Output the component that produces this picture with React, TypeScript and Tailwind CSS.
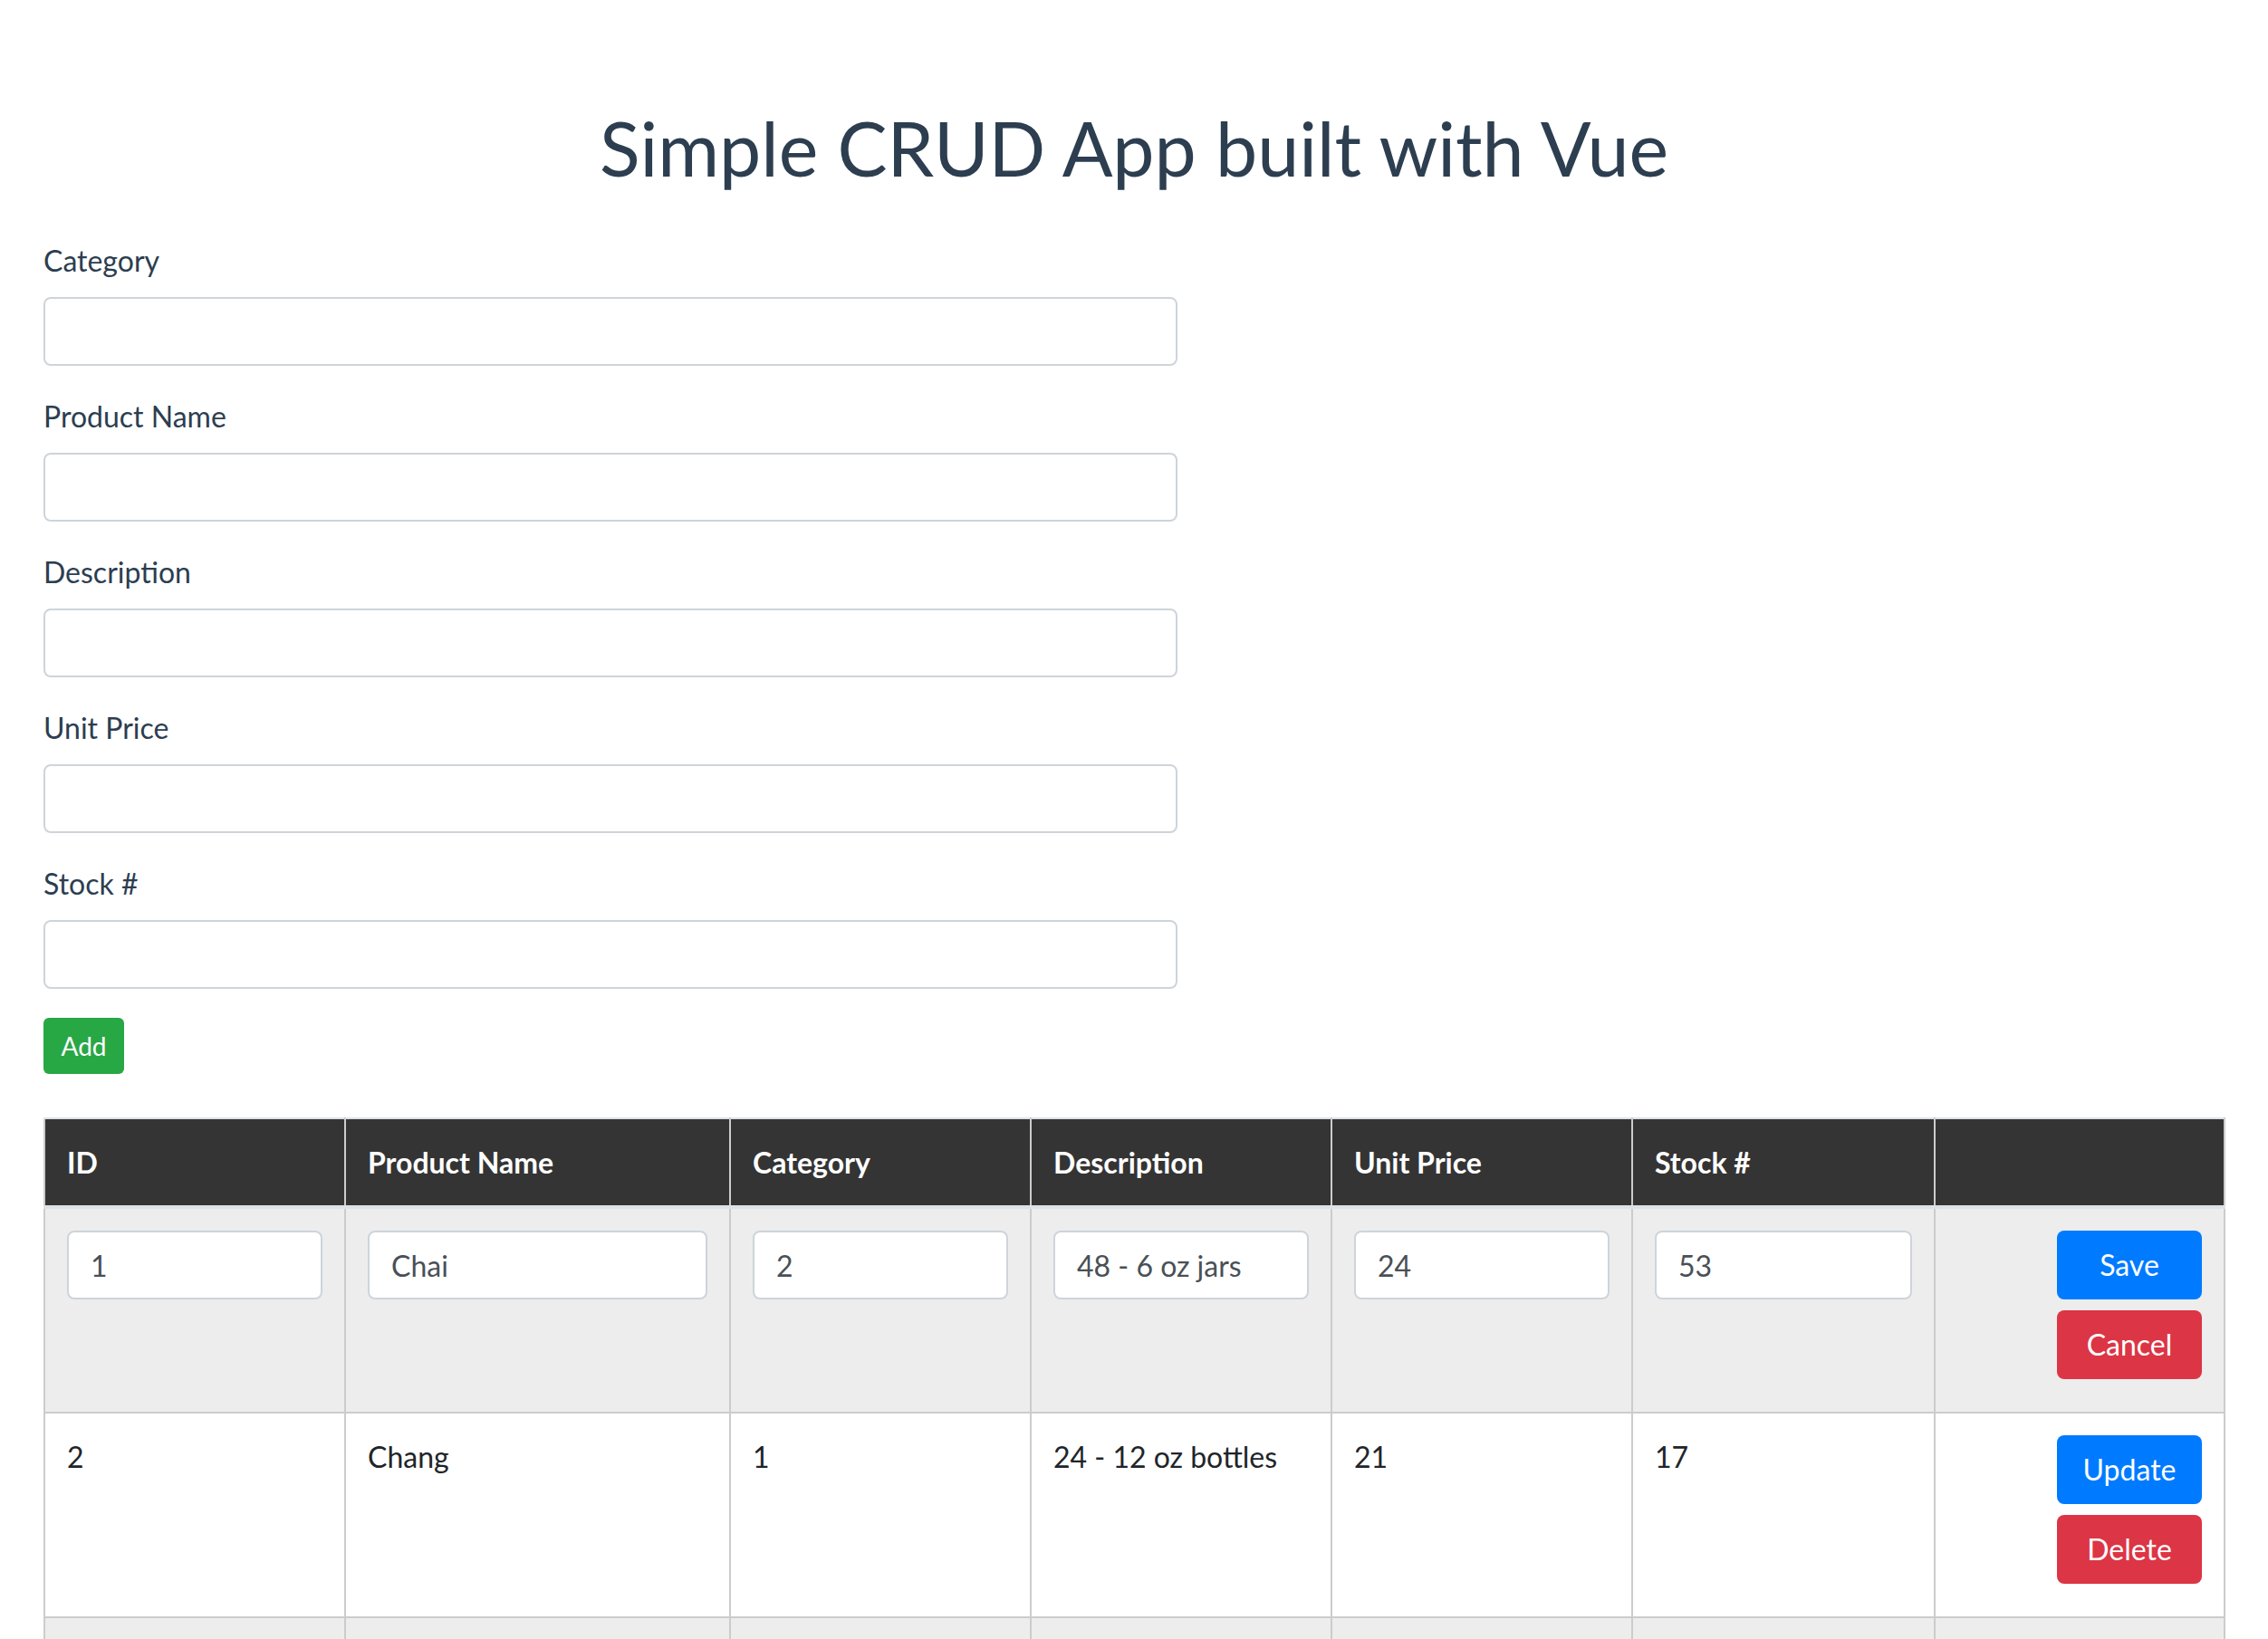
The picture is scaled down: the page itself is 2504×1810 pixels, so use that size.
import { useState } from "react";

type Product = {
  id: number;
  name: string;
  category: number;
  description: string;
  unitPrice: number;
  stock: number;
};

const fields = ["Category", "Product Name", "Description", "Unit Price", "Stock #"];

const initialProducts: Product[] = [
  { id: 1, name: "Chai", category: 2, description: "48 - 6 oz jars", unitPrice: 24, stock: 53 },
  { id: 2, name: "Chang", category: 1, description: "24 - 12 oz bottles", unitPrice: 21, stock: 17 },
];

const cellInput =
  "w-full h-[76px] px-6 bg-white border-2 border-[#ced4da] rounded-lg text-[32px] text-[#495057] outline-none";

const btn = "w-[160px] h-[76px] rounded-lg text-white text-[32px] leading-none";

const App = () => {
  const [products] = useState<Product[]>(initialProducts);
  const [editingId] = useState<number>(1);

  return (
    <div className="min-h-screen bg-white font-['Lato',sans-serif] text-[#2c3e50]">
      <h1 className="pt-[114px] mb-[51px] text-center text-[82.5px] leading-[1.2] font-normal">
        Simple CRUD App built with Vue
      </h1>

      <div className="px-12">
        <form className="w-[1252px]" onSubmit={(e) => e.preventDefault()}>
          {fields.map((f) => (
            <div key={f} className="mb-8">
              <label className="block mb-4 text-[32px] leading-[48px]">{f}</label>
              <input className="w-full h-[76px] px-6 border-2 border-[#ced4da] rounded-lg text-[32px] outline-none" />
            </div>
          ))}
          <button className="w-[89px] h-[62px] bg-[#28a745] text-white text-[28px] rounded-[6px]">Add</button>
        </form>

        <table className="mt-[48px] w-[2407px] table-fixed border-collapse text-[32px] leading-[48px] text-[#212529]">
          <colgroup>
            <col className="w-[332px]" />
            <col className="w-[425px]" />
            <col className="w-[332px]" />
            <col className="w-[332px]" />
            <col className="w-[332px]" />
            <col className="w-[334px]" />
            <col className="w-[320px]" />
          </colgroup>
          <thead>
            <tr className="bg-[#343434] text-white">
              {["ID", "Product Name", "Category", "Description", "Unit Price", "Stock #", ""].map((h, i) => (
                <th
                  key={i}
                  className="h-[98px] px-6 text-left font-bold border-2 border-[#cccccc] border-t-[#dee2e6] border-b-4 border-b-[#dee2e6]"
                >
                  {h}
                </th>
              ))}
            </tr>
          </thead>
          <tbody>
            {products.map((p, idx) => {
              const editing = p.id === editingId;
              const values = [p.id, p.name, p.category, p.description, p.unitPrice, p.stock];
              return (
                <tr key={p.id} className={idx % 2 === 0 ? "bg-[#ededed]" : "bg-white"}>
                  {values.map((v, i) => (
                    <td key={i} className="align-top px-6 pt-6 pb-9 border-2 border-[#cccccc]">
                      {editing ? <input className={cellInput} defaultValue={v} /> : v}
                    </td>
                  ))}
                  <td className="align-top px-6 pt-6 pb-9 border-2 border-[#cccccc]">
                    <div className="flex flex-col items-end gap-3">
                      <button className={`${btn} bg-[#007bff]`}>{editing ? "Save" : "Update"}</button>
                      <button className={`${btn} bg-[#dc3545]`}>{editing ? "Cancel" : "Delete"}</button>
                    </div>
                  </td>
                </tr>
              );
            })}
            <tr className="bg-[#ededed]">
              {[0, 1, 2, 3, 4, 5, 6].map((i) => (
                <td key={i} className="h-[224px] border-2 border-[#cccccc]"></td>
              ))}
            </tr>
          </tbody>
        </table>
      </div>
    </div>
  );
};

export default App;
